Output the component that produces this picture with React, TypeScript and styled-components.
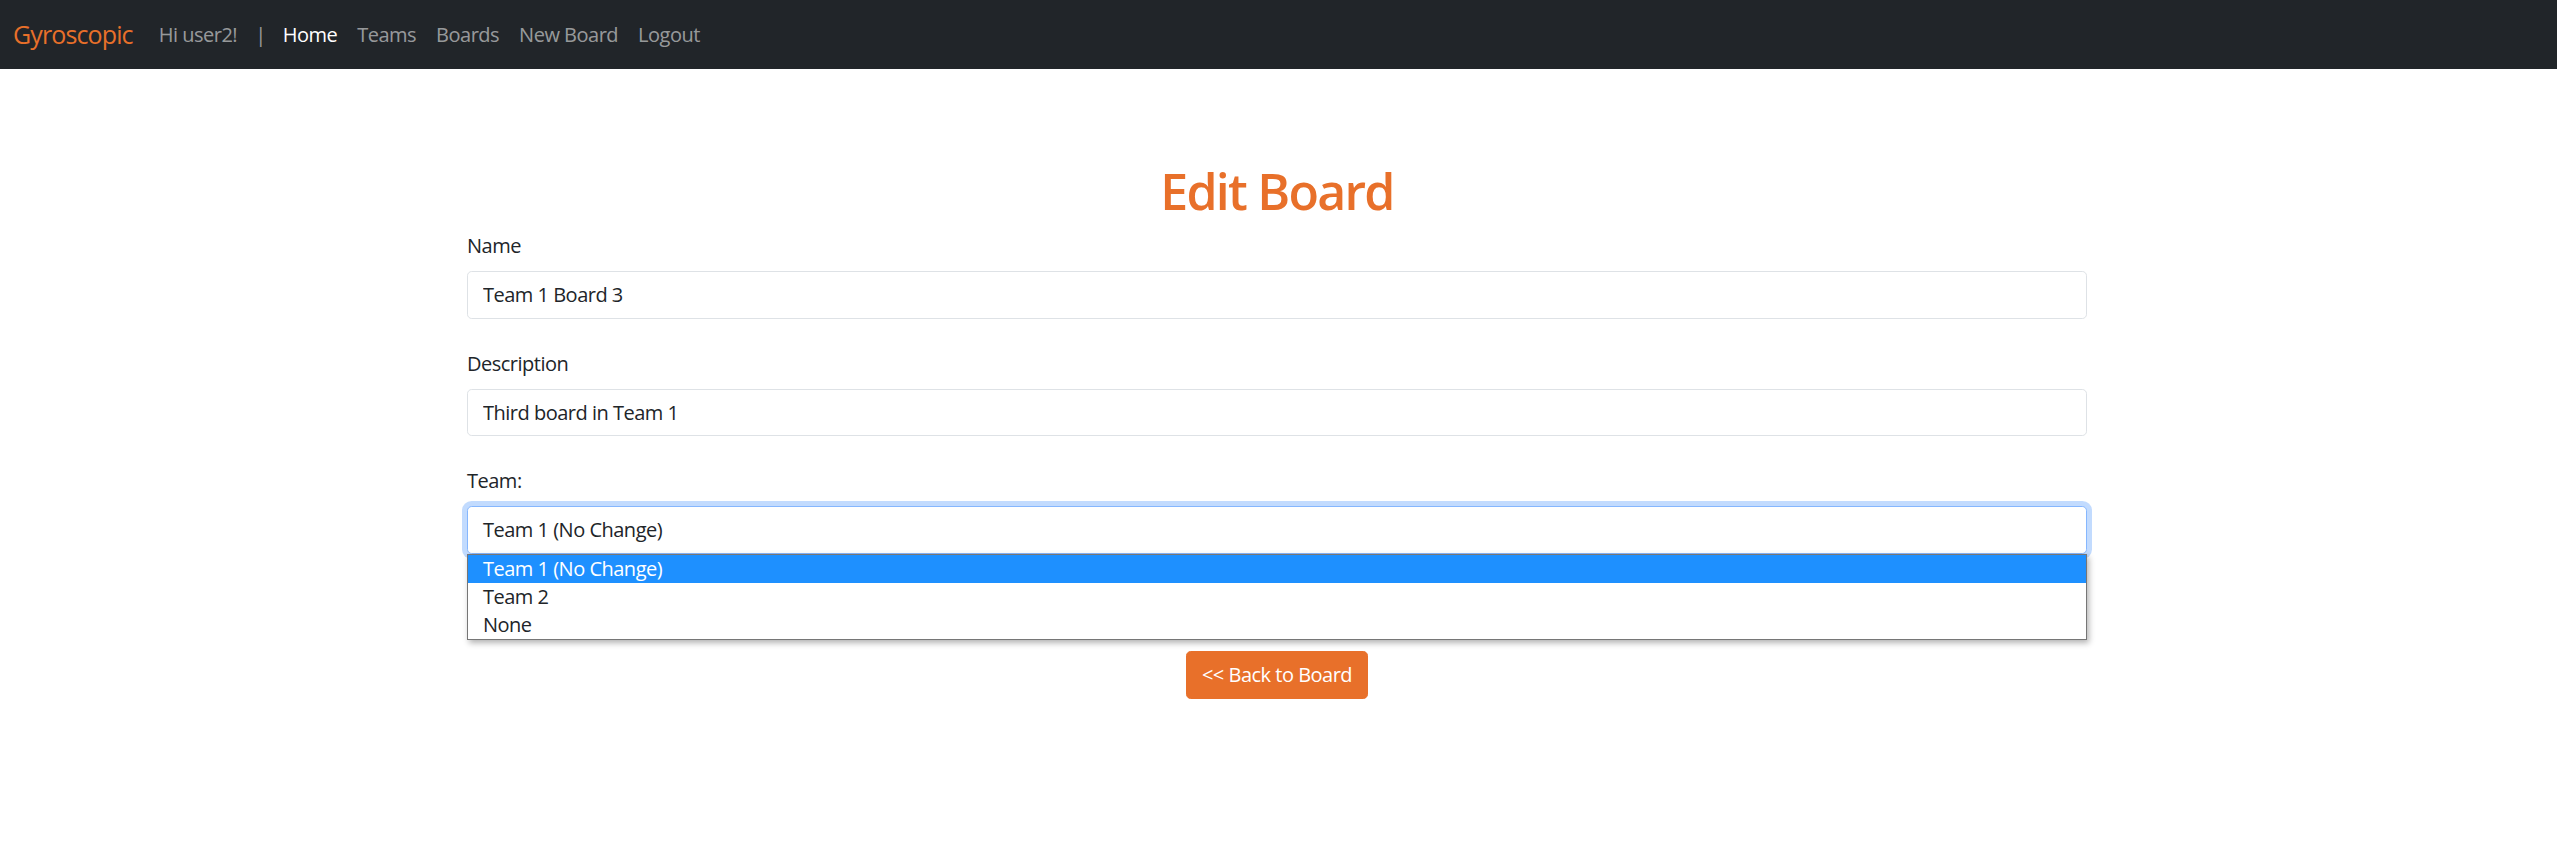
import styled, { createGlobalStyle } from "styled-components";

const ORANGE = "#e8702a";

const GlobalStyle = createGlobalStyle`
  html, body {
    margin: 0;
    padding: 0;
    background: #fff;
  }
  body {
    font-family: "Open Sans", "Noto Sans", "Liberation Sans", sans-serif;
    color: #212529;
    font-size: 20px;
    line-height: 1.5;
    letter-spacing: -0.025em;
  }
  * {
    box-sizing: border-box;
  }
`;

const Navbar = styled.nav`
  height: 69px;
  background-color: #212529;
  display: flex;
  align-items: center;
  padding: 0 13px;
`;

const Brand = styled.a`
  color: ${ORANGE};
  font-size: 25px;
  line-height: 37px;
  letter-spacing: -0.035em;
  margin-right: 16px;
  text-decoration: none;
`;

const NavList = styled.ul`
  display: flex;
  align-items: center;
  list-style: none;
  margin: 0;
  padding: 0;
`;

const NavItem = styled.li<{ $active?: boolean }>`
  padding: 0 10px;
  font-size: 20px;
  line-height: 30px;
  color: ${({ $active }) => ($active ? "#fff" : "rgba(255, 255, 255, 0.55)")};
  cursor: default;
`;

const Divider = styled.li`
  padding: 0 7px 0 8px;
  font-size: 20px;
  line-height: 30px;
  color: rgba(255, 255, 255, 0.55);
`;

const Container = styled.main`
  max-width: 1650px;
  margin: 0 auto;
  padding: 0 16.5px 0 13.5px;
`;

const Title = styled.h1`
  margin: 92px 0 10px;
  text-align: center;
  font-size: 50px;
  line-height: 60px;
  font-weight: 600;
  letter-spacing: -0.035em;
  color: ${ORANGE};
`;

const FormGroup = styled.div`
  margin-bottom: 30px;
`;

const Label = styled.label`
  display: block;
  margin-bottom: 10px;
  font-size: 20px;
  line-height: 30px;
`;

const Input = styled.input`
  display: block;
  width: 100%;
  height: 47.5px;
  padding: 7.5px 15px;
  font: inherit;
  font-size: 20px;
  letter-spacing: -0.025em;
  color: #212529;
  background: #fff;
  border: 1px solid #dee2e6;
  border-radius: 4.7px;
  outline: none;
`;

const SelectWrap = styled.div`
  position: relative;
`;

const SelectBox = styled.div`
  height: 47.5px;
  padding: 7.5px 15px;
  font-size: 20px;
  line-height: 30px;
  background: #fff;
  border: 1px solid #86b7fe;
  border-radius: 4.7px;
  box-shadow: 0 0 0 5px rgba(13, 110, 253, 0.25);
`;

const Dropdown = styled.ul`
  position: absolute;
  top: 100%;
  left: 0;
  right: 0;
  margin: 0;
  padding: 0;
  list-style: none;
  background: #fff;
  border: 1px solid #767676;
  box-shadow: 2px 3px 6px rgba(0, 0, 0, 0.3);
  z-index: 10;
`;

const Option = styled.li<{ $selected?: boolean }>`
  height: 28px;
  line-height: 28px;
  padding-left: 15px;
  font-size: 20px;
  color: ${({ $selected }) => ($selected ? "#fff" : "#212529")};
  background: ${({ $selected }) => ($selected ? "#1e90ff" : "transparent")};
`;

const ButtonRow = styled.div`
  display: flex;
  justify-content: center;
  margin-top: 97.5px;
`;

const Button = styled.button`
  height: 47.5px;
  padding: 7.5px 15px;
  font: inherit;
  font-size: 20px;
  line-height: 30px;
  letter-spacing: -0.025em;
  color: #fff;
  background-color: ${ORANGE};
  border: 1px solid ${ORANGE};
  border-radius: 4.7px;
  cursor: pointer;
`;

const navLinks = ["Teams", "Boards", "New Board", "Logout"];
const teams = ["Team 1 (No Change)", "Team 2", "None"];

export default function App() {
  return (
    <>
      <GlobalStyle />
      <Navbar>
        <Brand href="#">Gyroscopic</Brand>
        <NavList>
          <NavItem>Hi user2!</NavItem>
          <Divider>|</Divider>
          <NavItem $active>Home</NavItem>
          {navLinks.map((l) => (
            <NavItem key={l}>{l}</NavItem>
          ))}
        </NavList>
      </Navbar>
      <Container>
        <Title>Edit Board</Title>
        <FormGroup>
          <Label>Name</Label>
          <Input defaultValue="Team 1 Board 3" />
        </FormGroup>
        <FormGroup>
          <Label>Description</Label>
          <Input defaultValue="Third board in Team 1" />
        </FormGroup>
        <FormGroup>
          <Label>Team:</Label>
          <SelectWrap>
            <SelectBox role="combobox">Team 1 (No Change)</SelectBox>
            <Dropdown role="listbox">
              {teams.map((t, i) => (
                <Option key={t} $selected={i === 0}>
                  {t}
                </Option>
              ))}
            </Dropdown>
          </SelectWrap>
        </FormGroup>
        <ButtonRow>
          <Button>&lt;&lt; Back to Board</Button>
        </ButtonRow>
      </Container>
    </>
  );
}
